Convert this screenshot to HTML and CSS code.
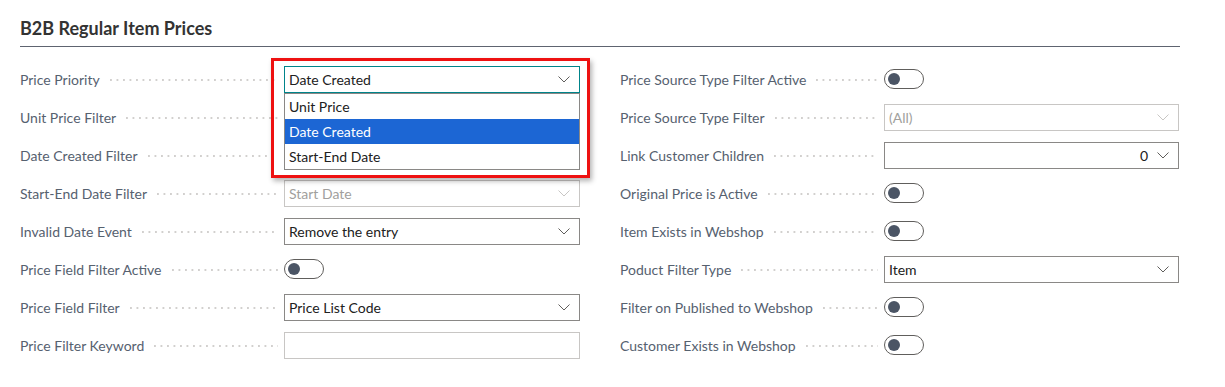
FILE: index.html
```html
<!DOCTYPE html>
<html lang="en">
<head>
  <meta charset="UTF-8" />
  <meta name="viewport" content="width=device-width, initial-scale=1.0" />
  <title>B2B Regular Item Prices</title>
  <link rel="stylesheet" href="styles.css">
</head>
<body>
  <div class="page">
    <h2 class="section-title">B2B Regular Item Prices</h2>

    <div class="columns">
      <div class="col">
        <div class="row">
          <div class="label"><span>Price Priority</span><i class="leader"></i></div>
          <div class="field-wrap">
            <div class="select focused">
              <span class="value">Date Created</span>
              <svg class="chevron" width="12" height="7" viewBox="0 0 12 7"><path d="M0.5 0.5 L6 6 L11.5 0.5" /></svg>
            </div>
            <div class="highlight-box"></div>
            <ul class="options">
              <li>Unit Price</li>
              <li class="selected">Date Created</li>
              <li>Start-End Date</li>
            </ul>
          </div>
        </div>
        <div class="row">
          <div class="label"><span>Unit Price Filter</span><i class="leader"></i></div>
          <div class="select"><span class="value"></span></div>
        </div>
        <div class="row">
          <div class="label"><span>Date Created Filter</span><i class="leader"></i></div>
          <div class="select"><span class="value"></span></div>
        </div>
        <div class="row">
          <div class="label"><span>Start-End Date Filter</span><i class="leader"></i></div>
          <div class="select disabled">
            <span class="value">Start Date</span>
            <svg class="chevron" width="12" height="7" viewBox="0 0 12 7"><path d="M0.5 0.5 L6 6 L11.5 0.5" /></svg>
          </div>
        </div>
        <div class="row">
          <div class="label"><span>Invalid Date Event</span><i class="leader"></i></div>
          <div class="select">
            <span class="value">Remove the entry</span>
            <svg class="chevron" width="12" height="7" viewBox="0 0 12 7"><path d="M0.5 0.5 L6 6 L11.5 0.5" /></svg>
          </div>
        </div>
        <div class="row">
          <div class="label"><span>Price Field Filter Active</span><i class="leader"></i></div>
          <div class="toggle"><i class="knob"></i></div>
        </div>
        <div class="row">
          <div class="label"><span>Price Field Filter</span><i class="leader"></i></div>
          <div class="select">
            <span class="value">Price List Code</span>
            <svg class="chevron" width="12" height="7" viewBox="0 0 12 7"><path d="M0.5 0.5 L6 6 L11.5 0.5" /></svg>
          </div>
        </div>
        <div class="row">
          <div class="label"><span>Price Filter Keyword</span><i class="leader"></i></div>
          <div class="select disabled"><span class="value"></span></div>
        </div>
      </div>

      <div class="col">
        <div class="row">
          <div class="label"><span>Price Source Type Filter Active</span><i class="leader"></i></div>
          <div class="toggle"><i class="knob"></i></div>
        </div>
        <div class="row">
          <div class="label"><span>Price Source Type Filter</span><i class="leader"></i></div>
          <div class="select disabled">
            <span class="value">(All)</span>
            <svg class="chevron" width="12" height="7" viewBox="0 0 12 7"><path d="M0.5 0.5 L6 6 L11.5 0.5" /></svg>
          </div>
        </div>
        <div class="row">
          <div class="label"><span>Link Customer Children</span><i class="leader"></i></div>
          <div class="select">
            <span class="value number">0</span>
            <svg class="chevron" width="12" height="7" viewBox="0 0 12 7"><path d="M0.5 0.5 L6 6 L11.5 0.5" /></svg>
          </div>
        </div>
        <div class="row">
          <div class="label"><span>Original Price is Active</span><i class="leader"></i></div>
          <div class="toggle"><i class="knob"></i></div>
        </div>
        <div class="row">
          <div class="label"><span>Item Exists in Webshop</span><i class="leader"></i></div>
          <div class="toggle"><i class="knob"></i></div>
        </div>
        <div class="row">
          <div class="label"><span>Poduct Filter Type</span><i class="leader"></i></div>
          <div class="select">
            <span class="value">Item</span>
            <svg class="chevron" width="12" height="7" viewBox="0 0 12 7"><path d="M0.5 0.5 L6 6 L11.5 0.5" /></svg>
          </div>
        </div>
        <div class="row">
          <div class="label"><span>Filter on Published to Webshop</span><i class="leader"></i></div>
          <div class="toggle"><i class="knob"></i></div>
        </div>
        <div class="row">
          <div class="label"><span>Customer Exists in Webshop</span><i class="leader"></i></div>
          <div class="toggle"><i class="knob"></i></div>
        </div>
      </div>
    </div>
  </div>
</body>
</html>
```

FILE: styles.css
```css
body {
  margin: 0;
  background: #ffffff;
  font-family: Lato, 'Open Sans', sans-serif;
  font-size: 14px;
  color: #212121;
}

.page {
  width: 1160px;
  margin-left: 20px;
}

.section-title {
  margin: 0;
  padding: 16px 0 6px;
  font-size: 18px;
  line-height: 24px;
  font-weight: 700;
  color: #333333;
  border-bottom: 1px solid #5e6470;
}

.columns {
  display: grid;
  grid-template-columns: 560px 559px;
  column-gap: 40px;
  margin-top: 13px;
}

.row {
  display: flex;
  align-items: center;
  height: 38px;
}

.label {
  width: 264px;
  flex: none;
  display: flex;
  align-items: center;
  color: #56616f;
  white-space: nowrap;
}

.leader {
  flex: 1;
  height: 2px;
  margin: 2px 6px 0 10px;
  background-image: linear-gradient(to right, #d2d0ce 2px, transparent 2px);
  background-size: 6.5px 2px;
  background-repeat: repeat-x;
}

.field-wrap {
  position: relative;
}

.select {
  box-sizing: border-box;
  width: 296px;
  height: 27px;
  display: flex;
  align-items: center;
  padding: 0 9px 0 4px;
  border: 1px solid #8a8886;
  background: #fff;
}

.select .value {
  flex: 1;
}

.select .number {
  text-align: right;
  margin-right: 9px;
}

.chevron path {
  fill: none;
  stroke: #605e5c;
  stroke-width: 1;
}

.select.focused {
  border-color: #00848a;
}

.select.disabled {
  border-color: #c8c6c4;
  color: #a19f9d;
}

.select.disabled .chevron path {
  stroke: #c8c6c4;
}

.options {
  position: absolute;
  left: 0;
  top: 27px;
  z-index: 2;
  box-sizing: border-box;
  width: 296px;
  margin: 0;
  padding: 0;
  list-style: none;
  background: #fff;
  border: 1px solid #8a8886;
}

.options li {
  height: 25px;
  line-height: 25px;
  padding-left: 4px;
}

.options li.selected {
  background: #1c66d4;
  color: #fff;
}

.highlight-box {
  position: absolute;
  left: -13px;
  top: -8px;
  z-index: 3;
  width: 313px;
  height: 114px;
  border: 3px solid #ee1111;
  box-shadow: 2px 3px 5px rgba(0, 0, 0, 0.3);
  pointer-events: none;
}

.toggle {
  box-sizing: border-box;
  width: 40px;
  height: 20px;
  border: 1px solid #605e5c;
  border-radius: 10px;
  display: flex;
  align-items: center;
  padding-left: 3px;
}

.knob {
  width: 12px;
  height: 12px;
  border-radius: 50%;
  background: #4b5565;
}
```
